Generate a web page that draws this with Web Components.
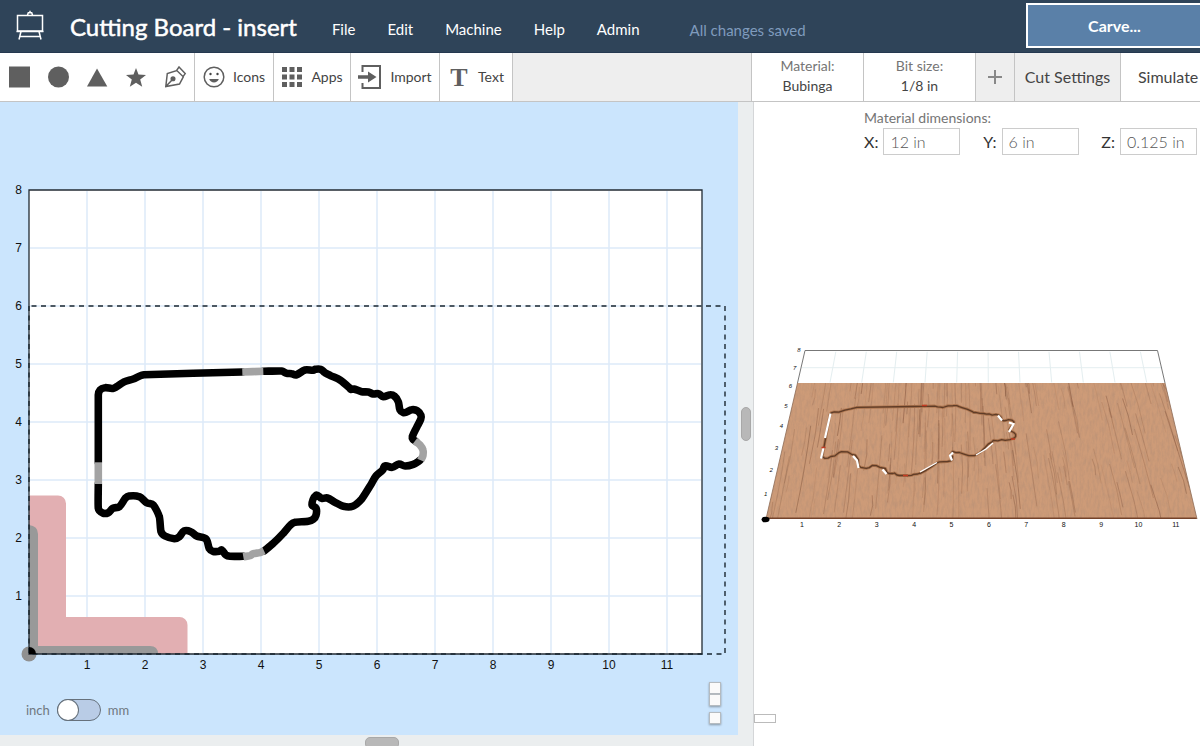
<!DOCTYPE html>
<html lang="en">
<head>
<meta charset="utf-8">
<title>Cutting Board - insert</title>
<style>
  body { margin: 0; font-family: Lato, "Open Sans", sans-serif; color: #444; background: #fff; }
</style>
</head>
<body>
<app-shell>
  <app-header slot="header" name="Cutting Board - insert" status="All changes saved"></app-header>
  <app-toolbar slot="toolbar"></app-toolbar>
  <design-canvas slot="design"></design-canvas>
  <material-form slot="form"></material-form>
  <board-preview slot="preview"></board-preview>
</app-shell>

<script>
const define = (name, html, setup) => {
  const tpl = document.createElement('template');
  tpl.innerHTML = html;
  customElements.define(name, class extends HTMLElement {
    constructor() {
      super();
      this.attachShadow({ mode: 'open' }).append(tpl.content.cloneNode(true));
    }
    connectedCallback() { if (setup) setup(this.shadowRoot, this); }
  });
};

/* Outline of the cut, in thirds of a canvas pixel from (80, 350); tabs are the uncut bridges. */
const cuts = [
  [[55,337],[55,135],[60,120],[75,113],[100,115],[130,97],[160,87],[192,74],[487,66]],
  [[550,64],[605,63],[620,70],[635,71],[648,75],[675,60],[700,61],[705,58],[722,58],[735,68],[750,76],[780,90],[808,113],[812,118],[822,117],[845,125],[865,126],[880,132],[895,131],[910,140],[930,134],[943,138],[955,155],[960,180],[970,188],[980,186],[995,179],[1012,182],[1023,196],[1022,208],[1010,232],[997,260],[999,268],[1007,274]],
  [[1020,331],[1000,343],[975,348],[957,342],[937,352],[915,348],[908,360],[888,378],[872,405],[845,447],[818,469],[790,469],[765,457],[742,444],[725,445],[708,436],[696,464],[708,474],[708,496],[700,508],[685,514],[645,517],[632,524],[610,550],[580,580],[552,603]],
  [[490,619],[450,619],[438,615],[425,600],[418,604],[398,604],[388,596],[378,567],[350,558],[332,545],[312,543],[298,560],[283,566],[255,558],[243,545],[238,500],[220,465],[200,458],[178,440],[147,438],[136,445],[118,470],[98,475],[85,488],[68,489],[55,475],[55,402]]
];
const tabs = [
  [[487,66],[550,64]],
  [[1005,273],[1020,285],[1029,300],[1029,316],[1022,331]],
  [[552,602],[540,608],[520,611],[510,617],[490,620]],
  [[55,402],[55,337]]
];
const toCanvas = ([x, y]) => [80 + x / 3, 350 + y / 3];
const pts = list => list.map(p => p.map(n => n.toFixed(1)).join(',')).join(' ');
/* Smooth path through the points: cubic segments, handles capped so long straights stay straight. */
const smooth = list => {
  let d = `M${pts([list[0]])}`;
  for (let i = 0; i < list.length - 1; i++) {
    const a = list[i - 1] || list[i], b = list[i], c = list[i + 1], e = list[i + 2] || c;
    const len = Math.hypot(c[0] - b[0], c[1] - b[1]);
    const handle = (p, q) => {
      const dx = q[0] - p[0], dy = q[1] - p[1], m = Math.hypot(dx, dy) || 1, h = Math.min(len / 3, 3);
      return [dx / m * h, dy / m * h];
    };
    const s = handle(a, c), t = handle(b, e);
    d += `C${pts([[b[0] + s[0], b[1] + s[1]], [c[0] - t[0], c[1] - t[1]], c])}`;
  }
  return d;
};
/* Perspective of the 3D view: inches on the bed to pixels of the preview. */
const project = (x, y) => {
  const w = 1 + 0.0275 * y;
  return [982 + (x - 5.8) * 37.07 / w, 519 - 25.77 * y / w];
};

define('app-shell', `
<style>
  :host { display: flex; flex-direction: column; min-height: 100vh; overflow: hidden; }
  main { flex: 1; display: grid; grid-template-columns: minmax(0, 754fr) minmax(0, 446fr); }
  .left { display: grid; grid-template: minmax(0, 1fr) 11px / minmax(0, 1fr) 15px; background: #ebeeef; border-right: 1px solid #d4d6d8; }
  .grip { place-self: center; border: 1px solid #a8a8a8; background: #b8b8b8; box-sizing: border-box; }
  .side { width: 10px; height: 34px; border-radius: 5px; margin-top: 10px; }
  .bottom { width: 34px; height: 12px; border-radius: 5px; place-self: start center; margin-top: 2px; margin-left: 26px; }
  .right { display: flex; flex-direction: column; background: #fff; }
  .left, .right { min-width: 0; }
</style>
<slot name="header"></slot>
<slot name="toolbar"></slot>
<main>
  <section class="left"><slot name="design"></slot><div class="grip side"></div><div class="grip bottom"></div></section>
  <section class="right"><slot name="form"></slot><slot name="preview"></slot></section>
</main>`);

define('app-header', `
<style>
  :host { display: flex; align-items: center; height: 53px; background: #2f4459; box-shadow: inset 0 -1px #253850; color: #fff; overflow: hidden; box-sizing: border-box; padding-left: 15px; }
  svg { display: block; flex: none; margin-bottom: 2px; }
  h1 { margin: 0 0 0 25px; font-size: 24px; line-height: 32px; font-weight: 400; white-space: nowrap; -webkit-text-stroke: 0.5px; }
  nav { display: flex; gap: 32px; margin-left: 35px; padding-top: 4px; }
  nav button { all: unset; font-size: 15px; line-height: 20px; cursor: pointer; }
  output { margin-left: 50px; padding-top: 6px; font-size: 15px; line-height: 20px; color: #7f9bbd; flex: 1; white-space: nowrap; }
  .carve { flex: none; width: 177px; height: 45px; margin: 0 -3px 3px 0; box-sizing: border-box; border: 2px solid #fff; background: #5a80a8; color: #fff; font: 700 16px/20px Lato, sans-serif; padding: 2px 0 0; }
</style>
<svg width="30" height="32" viewBox="0 0 30 32" fill="none" stroke="#fff" stroke-width="1.5"><path d="M2.5 5.500h25v15.500h-25zM12.500 5l.8-2.200h3.400l.8 2.200M15 3V0.800M6 21.500l-2 8M24 21.500l2 8M5 26.500h20"/><path d="M1.500 21.500h27"/></svg>
<h1></h1>
<nav><button>File</button><button>Edit</button><button>Machine</button><button>Help</button><button>Admin</button></nav>
<output></output>
<button class="carve">Carve...</button>`,
(root, host) => {
  root.querySelector('h1').textContent = host.getAttribute('name');
  root.querySelector('output').textContent = host.getAttribute('status');
});

define('tool-button', `
<style>
  :host { display: flex; box-sizing: border-box; border-right: 1px solid #c4c4c4; background: #fff; }
  button { all: unset; flex: 1; display: flex; align-items: center; justify-content: center; gap: 8px; font-size: 14px; line-height: 18px; color: #444; cursor: pointer; white-space: nowrap; }
</style>
<button><slot name="icon"></slot><slot></slot></button>`);

define('setting-tile', `
<style>
  :host { display: flex; box-sizing: border-box; width: 112px; background: #fff; border-right: 1px solid #c4c4c4; }
  button { all: unset; flex: 1; text-align: center; font-size: 14px; line-height: 20px; padding: 3px 0 5px; cursor: pointer; }
  .label { display: block; color: #757575; }
</style>
<button><span class="label"></span><slot></slot></button>`,
(root, host) => { root.querySelector('.label').textContent = host.getAttribute('label'); });

define('app-toolbar', `
<style>
  :host { display: flex; height: 49px; box-sizing: border-box; background: #eee; border-bottom: 1px solid #c4c4c4; }
  svg { display: block; fill: #5f5f5f; }
  .shapes { display: flex; align-items: center; gap: 17px; width: 195px; box-sizing: border-box; padding-left: 9px; background: #fff; border-right: 1px solid #c4c4c4; }
  .shapes button { all: unset; cursor: pointer; }
  .icons { width: 79px; } .apps { width: 77px; } .import { width: 89px; } .text { width: 73px; }
  .settings { display: flex; margin-left: auto; border-left: 1px solid #c4c4c4; }
  .settings > button { border-width: 0 1px 0 0; border-style: solid; border-color: #c4c4c4; background: #eee; padding: 0; font: 400 16px/20px Lato, sans-serif; color: #444; }
  .settings > .plus { width: 39px; display: grid; place-items: center; }
  .settings > .wide { width: 106px; }
  .settings > .simulate { width: 79px; background: #fff; text-align: left; padding-left: 17px; border: 0; white-space: nowrap; }
</style>
<div class="shapes">
  <button aria-label="Square"><svg width="22" height="22"><path d="M0 .5h21v21H0z"/></svg></button>
  <button aria-label="Circle"><svg width="22" height="22"><circle cx="10.500" cy="11" r="10.500"/></svg></button>
  <button aria-label="Triangle"><svg width="22" height="22"><path d="M10 2.500l10.300 18H0z"/></svg></button>
  <button aria-label="Star"><svg width="22" height="22"><path d="M10 2l2.500 6.500 7.500.4-5.800 4.600 2 7.200-6.200-4-6.200 4 2-7.200L0 8.900l7.500-.4z"/></svg></button>
  <button aria-label="Pen"><svg width="22" height="22" viewBox="1 0 22 22" style="fill:none;stroke:#5f5f5f;stroke-width:1.500"><path d="M1.800 20.500L3.300 7.500 12.800 4.500l6.500 6.300L15.500 18 1.800 20.500 8.500 13.500M12.300 4.900L15 1l6.200 6.600-2.200 3"/><circle cx="9" cy="12.800" r="1.800" style="fill:#5f5f5f"/></svg></button>
</div>
<tool-button class="icons">
  <svg slot="icon" width="22" height="22" style="fill:none;stroke:#5f5f5f;stroke-width:1.500"><circle cx="11" cy="11" r="9.800"/><circle cx="7.500" cy="8" r="1.200" style="fill:#444;stroke:none"/><circle cx="14.500" cy="8" r="1.200" style="fill:#444;stroke:none"/><path d="M6.200 13h9.600c-1.300 4.600-8.300 4.600-9.600 0z" style="fill:#5f5f5f;stroke:none"/></svg>Icons</tool-button>
<tool-button class="apps">
  <svg slot="icon" width="22" height="22"><path d="M1 1h5v5H1zM8.500 1h5v5h-5zM16 1h5v5h-5zM1 8.500h5v5H1zM8.500 8.500h5v5h-5zM16 8.500h5v5h-5zM1 16h5v5H1zM8.500 16h5v5h-5zM16 16h5v5h-5z"/></svg>Apps</tool-button>
<tool-button class="import">
  <svg slot="icon" width="24" height="26"><path d="M3.500 1h19.500v24H3.500v-6h2v4h15.500V3H5.500v5h-2z"/><path d="M0 11.300h10V7.500l8.500 5.500-8.500 5.500v-3.800H0z"/></svg>Import</tool-button>
<tool-button class="text">
  <svg slot="icon" width="22" height="34"><text x="11" y="26" text-anchor="middle" font-family="Liberation Serif, serif" font-size="26" font-weight="700">T</text></svg>Text</tool-button>
<div class="settings">
  <setting-tile label="Material:">Bubinga</setting-tile>
  <setting-tile label="Bit size:">1/8 in</setting-tile>
  <button class="plus" aria-label="Add bit"><svg width="14" height="14"><path d="M6 0h2v6h6v2H8v6H6V8H0V6h6z" fill="#888"/></svg></button>
  <button class="wide">Cut Settings</button>
  <button class="simulate">Simulate</button>
</div>`);

define('unit-switch', `
<style>
  :host { display: flex; align-items: center; gap: 7px; font-size: 13px; line-height: 18px; color: #6f7880; }
  label { display: contents; }
  input { appearance: none; margin: 0; width: 44px; height: 22px; border: 1px solid #66717c; border-radius: 11px; background: #b9cce6; box-sizing: border-box; display: flex; }
  input::before { content: ""; width: 20px; height: 20px; border-radius: 50%; background: #fff; box-shadow: 0 0 0 1px #66717c; }
  input:checked { justify-content: flex-end; }
</style>
<label for="unit"><span>inch</span></label><input id="unit" type="checkbox" role="switch"><label for="unit"><span>mm</span></label>`);

define('design-canvas', `
<style>
  :host { display: block; position: relative; background: #cbe5fd; min-width: 0; }
  svg { display: block; width: 100%; height: 100%; }
  text { font: 12px "Liberation Sans", Arial, sans-serif; fill: #111; }
  .row text { text-anchor: end; }
  .col text { text-anchor: middle; }
  unit-switch { position: absolute; left: 26px; bottom: 14px; }
  .zoom { position: absolute; right: 17px; bottom: 11px; display: flex; flex-direction: column; }
  .zoom button { width: 12px; height: 12px; padding: 0; border: 1px solid #b5bbc0; background: #fafafa; box-shadow: 0 1px 2px #8897a5; }
  .zoom button:last-child { margin-top: 6px; }
</style>
<svg viewBox="0 102 738 633">
  <path d="M29 190h673v464H29z" fill="#fff"/>
  <g class="grid" stroke="#dceaf8" stroke-width="1.500"></g>
  <path d="M29 495.500h29a8 8 0 0 1 8 8v113.500h113.500a8 8 0 0 1 8 8V654H29z" fill="#e2afb2"/>
  <path d="M29 525q9 1 9 9v112h112q8 0 8 8H29z" fill="#999"/>
  <circle cx="29" cy="654" r="7.500" fill="#909090"/>
  <path d="M29 190h673v464H29z" fill="none" stroke="#232b33" stroke-width="1.300"/>
  <path d="M29 306v348h696V306z" fill="none" stroke="#1a2730" stroke-width="1.400" stroke-dasharray="5 4.500"/>
  <path d="M29 647a7 7 0 0 1 7 7h-7z" fill="#000"/>
  <g class="row"></g><g class="col"></g>
  <g class="cut" fill="none" stroke="#000" stroke-width="7.600" stroke-linejoin="round" stroke-linecap="round"></g>
</svg>
<unit-switch></unit-switch>
<div class="zoom"><button aria-label="Zoom in"></button><button aria-label="Zoom out"></button><button aria-label="Fit"></button></div>`,
root => {
  const q = s => root.querySelector(s);
  let grid = '', row = '', col = '';
  for (let n = 1; n < 12; n++) {
    grid += `<path d="M${29 + 58 * n} 191v462"/>`;
    col += `<text x="${29 + 58 * n}" y="669">${n}</text>`;
  }
  for (let n = 1; n < 9; n++) {
    if (n < 8) grid += `<path d="M30 ${654 - 58 * n}h671"/>`;
    row += `<text x="22" y="${658 - 58 * n}">${n}</text>`;
  }
  q('.grid').innerHTML = grid;
  q('.row').innerHTML = row;
  q('.col').innerHTML = col;
  q('.cut').innerHTML = cuts.map(c => `<path d="${smooth(c.map(toCanvas))}"/>`).join('') +
    tabs.map(c => `<path stroke="#a3a3a3" stroke-linecap="butt" d="${smooth(c.map(toCanvas))}"/>`).join('');
});

define('material-form', `
<style>
  :host { display: block; padding: 6px 3px 0 12px; }
  form { width: 333px; margin-left: auto; }
  fieldset { border: 0; margin: 0; padding: 0; min-width: 0; }
  legend { padding: 0; font-size: 14px; line-height: 20px; color: #757575; }
  .fields { display: flex; justify-content: space-between; }
  label { display: flex; align-items: center; gap: 5px; font-size: 16px; line-height: 20px; color: #333; }
  input { width: 77px; height: 27px; box-sizing: border-box; padding: 0 6px; border: 1px solid #ccc; font: 300 16px/20px Lato, sans-serif; color: #555; background: #fff; }
</style>
<form><fieldset><legend>Material dimensions:</legend>
<div class="fields"><label>X: <input value="12 in"></label><label>Y: <input value="6 in"></label><label>Z: <input value="0.125 in"></label></div>
</fieldset></form>`);

define('board-preview', `
<style>
  :host { display: flex; flex: 1; position: relative; min-height: 0; }
  svg { display: block; width: 100%; height: 100%; }
  text { font: 7px "Liberation Sans", Arial, sans-serif; fill: #111; text-anchor: middle; }
  .row text { font-size: 6px; font-style: italic; }
  button { position: absolute; left: 0; bottom: 23px; width: 22px; height: 9px; padding: 0; border: 1px solid #bbb; background: #fff; }
</style>
<svg viewBox="754 155 446 591" preserveAspectRatio="xMidYMin meet">
  <defs>
    <clipPath id="board"><path d="M797.500 383H1165l32 136H766z"/></clipPath>
    <filter id="wood" x="0" y="0" width="1" height="1">
      <feTurbulence type="fractalNoise" baseFrequency="0.4 0.12" numOctaves="3" seed="8"/>
      <feColorMatrix values="0 0 0 0 .45  0 0 0 0 .27  0 0 0 0 .18  1.800 0 0 0 -.7"/>
    </filter>
  </defs>
  <g class="grid" stroke="#e4eef0" stroke-width="1" fill="none"></g>
  <path d="M797.500 383L805 350.500h352.500L1165 383" fill="none" stroke="#777" stroke-width="1"/>
  <g clip-path="url(#board)">
    <path d="M760 380h440v142H760z" fill="#cd9b78"/>
    <path d="M760 380h440v142H760z" filter="url(#wood)" opacity=".6"/>
    <g class="grain" fill="none" stroke="#7d4f38"></g>
    <path d="M766 518.500h432" stroke="#74432a" stroke-width="2"/>
  </g>
  <path d="M797.500 383L766 519M1165 383l32 136" stroke="#8d6b55" stroke-width=".8"/>
  <g class="groove" fill="none" stroke-linejoin="round" stroke-linecap="round"></g>
  <g fill="none" stroke="#fff" stroke-width="1.900">
    <path d="M830.500 413.500L825 438M823.500 448l-2.500 10.500M853 456l4 4.500 1.500 7.500M882.500 469.500l4 4.500M953 452.500l-3 3 2 5M998 415.500l4 5M1009 422.500l4.500 1.500-4.500 8" stroke-width="2.200"/>
    <path d="M920 472l8-4.500 9-5M976 455l10-6 7-6" stroke-width="1.400"/>
  </g>
  <path d="M922 405.500h5M821.500 447.500h4M903 475.500h5M1011 439h4" stroke="#c43b22" stroke-width="1.500"/>
  <ellipse cx="765.500" cy="519.500" rx="4" ry="2.800"/>
  <g class="row"></g><g class="col"></g>
</svg>
<button aria-label="View controls"></button>`,
root => {
  const q = s => root.querySelector(s);
  let seed = 11;
  const rand = () => (seed = (seed * 16807) % 2147483647) / 2147483647;
  let grain = '';
  for (let i = 0; i < 190; i++) {
    const x = rand() * 12.4 - 0.3, y = rand() * 7 - 1, len = .6 + rand() * 3.2, drift = (x > 6 ? .06 : .02) * len;
    const a = project(x, y), b = project(x - drift / 2 + rand() * .08, y + len / 2), c = project(x - drift, y + len);
    grain += `<path d="M${pts([a])}Q${pts([b])} ${pts([c])}" stroke-width="${(.5 + rand() * .5).toFixed(1)}" opacity="${(.12 + rand() * .4).toFixed(2)}"/>`;
  }
  q('.grain').innerHTML = grain;
  let grid = `<polyline points="${pts([project(0, 7), project(11.6, 7)])}"/>`, row = '', col = '';
  for (let n = 1; n < 12; n++) {
    grid += `<polyline points="${pts([project(n, 6.2), project(n, 7.9)])}"/>`;
    col += `<text x="${(764.5 + 37.4 * n).toFixed(1)}" y="526.500">${n}</text>`;
  }
  for (let n = 1; n < 9; n++) {
    const [x, y] = project(0, n);
    row += `<text x="${(x - 7).toFixed(1)}" y="${(y + 2).toFixed(1)}">${n}</text>`;
  }
  q('.grid').innerHTML = grid;
  q('.row').innerHTML = row;
  q('.col').innerHTML = col;
  /* The board's top face stands a little above the bed. */
  const top = p => { const [x, y] = toCanvas(p), s = project((x - 29) / 58, (654 - y) / 58); return [s[0], s[1] - 2]; };
  const all = cuts.map((c, i) => `<polyline points="${pts([...c, ...tabs[i]].map(top))}"/>`).join('');
  q('.groove').innerHTML = `<g stroke="#ad7650" stroke-width="3">${all}</g><g stroke="#5f3c27" stroke-width="1.300">${all}</g>`;
});
</script>
</body>
</html>
